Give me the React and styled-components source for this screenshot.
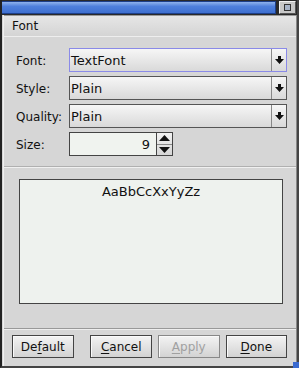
import styled, { createGlobalStyle } from 'styled-components'

const Global = createGlobalStyle`
  html, body { margin: 0; padding: 0; background: #d6d6d6; }
  * { box-sizing: border-box; }
`

function Combo({ value, focused }) {
  return (
    <ComboBox $focused={focused}>
      <ComboText>{value}</ComboText>
      <ComboArrow>
        <svg width="9" height="8" viewBox="0 0 9 8"><path d="M3 0h3v3h3L4.5 8 0 3h3z" fill="#111" /></svg>
      </ComboArrow>
    </ComboBox>
  )
}

function App() {
  return (
    <Window>
      <Global />
      <TitleBar>
        <TitleFill />
        <CloseBtn><span /></CloseBtn>
      </TitleBar>
      <Body>
        <Header>Font</Header>
        <Form>
          <Row>
            <Label>Font:</Label>
            <Combo value="TextFont" focused />
          </Row>
          <Row>
            <Label>Style:</Label>
            <Combo value="Plain" />
          </Row>
          <Row>
            <Label>Quality:</Label>
            <Combo value="Plain" />
          </Row>
          <Row>
            <Label>Size:</Label>
            <Spinner>
              <SpinField>9</SpinField>
              <SpinButtons>
                <SpinBtn>
                  <svg width="11" height="6" viewBox="0 0 11 6"><path d="M5.5 0L11 6H0z" fill="#111" /></svg>
                </SpinBtn>
                <SpinBtn>
                  <svg width="11" height="6" viewBox="0 0 11 6"><path d="M0 0h11L5.5 6z" fill="#111" /></svg>
                </SpinBtn>
              </SpinButtons>
            </Spinner>
          </Row>
        </Form>
        <Preview>AaBbCcXxYyZz</Preview>
        <Buttons>
          <Button>De<u>f</u>ault</Button>
          <Gap />
          <Button><u>C</u>ancel</Button>
          <Button $disabled><u>A</u>pply</Button>
          <Button><u>D</u>one</Button>
        </Buttons>
      </Body>
    </Window>
  )
}

export default App

const Window = styled.div`
  width: 299px;
  height: 368px;
  display: flex;
  flex-direction: column;
  background: #d6d6d6;
  border-left: 2px solid #222;
  border-right: 2px solid #444;
  border-bottom: 2px solid #444;
  font-family: "DejaVu Sans", sans-serif;
  font-size: 12px;
  color: #111;
  position: relative;
  &::after {
    content: '';
    position: absolute;
    right: -2px;
    bottom: -2px;
    width: 6px;
    height: 6px;
    background: #3a6ad0;
  }
`
const TitleBar = styled.div`
  height: 15px;
  display: flex;
  align-items: stretch;
  background: #2a2a2a;
  padding: 1px 0 1px 0;
`
const TitleFill = styled.div`
  flex: 1;
  background: linear-gradient(#8fb2ec, #4f80dc 40%, #3e6fd0);
  border: 1px solid #1d3f8a;
  border-left: none;
`
const CloseBtn = styled.div`
  width: 17px;
  margin-left: 3px;
  margin-right: 1px;
  background: #c8c8c8;
  border: 1px solid #f2f2f2;
  border-right-color: #555;
  border-bottom-color: #555;
  display: flex;
  align-items: center;
  justify-content: center;
  span {
    width: 7px;
    height: 7px;
    border: 1px solid #333;
    background: #a8b4c8;
  }
`
const Body = styled.div`
  flex: 1;
  display: flex;
  flex-direction: column;
  border-left: 1px solid #f0f0f0;
  border-right: 1px solid #888;
  margin-left: 1px;
`
const Header = styled.div`
  height: 22px;
  padding: 3px 0 0 8px;
  background: linear-gradient(#e6e6e6, #d4d4d4);
  border-top: 1px solid #999;
  border-bottom: 1px solid #eee;
`
const Form = styled.div`
  display: flex;
  flex-direction: column;
  gap: 4px;
  padding: 11px 9px 10px 12px;
  border-bottom: 1px solid #b0b0b0;
  box-shadow: 0 1px 0 #f0f0f0;
`
const Row = styled.div`
  display: flex;
  align-items: center;
  height: 24px;
`
const Label = styled.div`
  width: 53px;
  padding-top: 1px;
`
const ComboBox = styled.div`
  flex: 1;
  height: 24px;
  display: flex;
  border: 1px solid ${p => (p.$focused ? '#8a8ae8' : '#555')};
  background: linear-gradient(#f6f6f6, #d9d9d9);
`
const ComboText = styled.div`
  flex: 1;
  padding: 4px 0 0 1px;
  font-size: 13px;
`
const ComboArrow = styled.div`
  width: 15px;
  border-left: 1px solid #888;
  display: flex;
  align-items: center;
  justify-content: center;
`
const Spinner = styled.div`
  display: flex;
  height: 24px;
`
const SpinField = styled.div`
  width: 88px;
  border: 1px solid #444;
  background: #f0f3ef;
  text-align: right;
  padding: 4px 6px 0 0;
  font-size: 13px;
`
const SpinButtons = styled.div`
  width: 16px;
  display: flex;
  flex-direction: column;
  border: 1px solid #444;
  border-left: none;
  background: linear-gradient(#f2f2f2, #d6d6d6);
`
const SpinBtn = styled.div`
  flex: 1;
  display: flex;
  align-items: center;
  justify-content: center;
  & + & { border-top: 1px solid #888; }
`
const Preview = styled.div`
  margin: 12px 13px 0 15px;
  height: 125px;
  border: 1px solid #444;
  background: #eef2ee;
  text-align: center;
  padding-top: 4px;
  font-size: 13px;
`
const Buttons = styled.div`
  margin-top: 24px;
  flex: 1;
  display: flex;
  align-items: center;
  gap: 6px;
  padding: 0 9px 2px 8px;
  border-top: 1px solid #999;
  box-shadow: inset 0 1px 0 #eee;
`
const Gap = styled.div`
  width: 5px;
`
const Button = styled.div`
  width: 62px;
  height: 23px;
  border: 1px solid #444;
  box-shadow: inset 1px 1px 0 #fafafa;
  background: linear-gradient(#f3f3f3, #d3d3d3);
  display: flex;
  align-items: center;
  justify-content: center;
  font-size: 12px;
  color: ${p => (p.$disabled ? '#a0a0a0' : '#111')};
  border-color: ${p => (p.$disabled ? '#888' : '#444')};
  u { text-underline-offset: 2px; }
`
